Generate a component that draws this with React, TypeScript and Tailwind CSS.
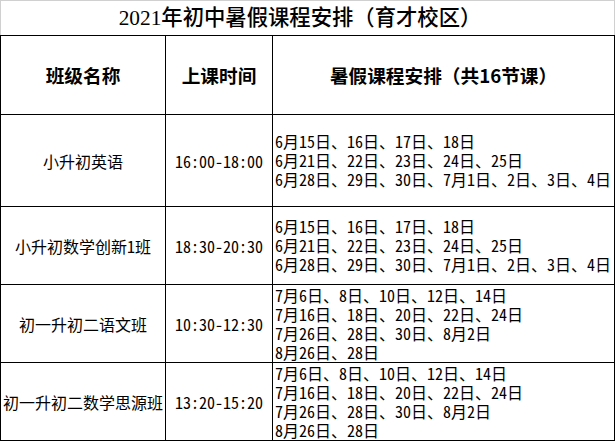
import React from "react";

const rows = [
  {
    name: "小升初英语",
    time: "16:00-18:00",
    lines: [
      "6月15日、16日、17日、18日",
      "6月21日、22日、23日、24日、25日",
      "6月28日、29日、30日、7月1日、2日、3日、4日",
    ],
  },
  {
    name: "小升初数学创新1班",
    time: "18:30-20:30",
    lines: [
      "6月15日、16日、17日、18日",
      "6月21日、22日、23日、24日、25日",
      "6月28日、29日、30日、7月1日、2日、3日、4日",
    ],
  },
  {
    name: "初一升初二语文班",
    time: "10:30-12:30",
    lines: [
      "7月6日、8日、10日、12日、14日",
      "7月16日、18日、20日、22日、24日",
      "7月26日、28日、30日、8月2日",
      "8月26日、28日",
    ],
  },
  {
    name: "初一升初二数学思源班",
    time: "13:20-15:20",
    lines: [
      "7月6日、8日、10日、12日、14日",
      "7月16日、18日、20日、22日、24日",
      "7月26日、28日、30日、8月2日",
      "8月26日、28日",
    ],
  },
];

const body = "[font-family:'Noto_Sans_Mono_CJK_SC','Noto_Sans_CJK_SC',sans-serif]";

export default function App() {
  return (
    <div className="w-[616px] h-[441px] bg-white text-black overflow-hidden">
      <div className="w-[615px] h-[35px] border-t border-x border-[#d0d0d0] flex items-center justify-center pr-[15px] pt-[2px] text-[21.33px] leading-none font-['Liberation_Serif','Noto_Sans_CJK_SC',serif] font-medium">
        2021年初中暑假课程安排（育才校区）
      </div>
      <div className="w-[615px] grid grid-cols-[165px_107px_342px] grid-rows-[79px_92px_78px_78px_78px] border-l border-t border-black">
        <div className="border-r border-b border-black flex items-center justify-center text-[18.67px] font-bold font-['Noto_Sans_CJK_SC',sans-serif]">
          班级名称
        </div>
        <div className="border-r border-b border-black flex items-center justify-center text-[18.67px] font-bold font-['Noto_Sans_CJK_SC',sans-serif]">
          上课时间
        </div>
        <div className="border-r border-b border-black flex items-center justify-center text-[18.67px] font-bold font-['Noto_Sans_CJK_SC',sans-serif]">
          暑假课程安排（共16节课）
        </div>
        {rows.map((r) => (
          <React.Fragment key={r.name}>
            <div className={`border-r border-b border-black flex items-center justify-center text-[16px] whitespace-nowrap ${body}`}>
              {r.name}
            </div>
            <div className={`border-r border-b border-black flex items-center justify-center text-[16px] whitespace-nowrap ${body}`}>
              {r.time}
            </div>
            <div className={`border-r border-b border-black flex flex-col justify-center pl-[2px] text-[16px] leading-[19px] whitespace-nowrap ${body}`}>
              {r.lines.map((l, i) => (
                <div key={i}>{l}</div>
              ))}
            </div>
          </React.Fragment>
        ))}
      </div>
    </div>
  );
}
